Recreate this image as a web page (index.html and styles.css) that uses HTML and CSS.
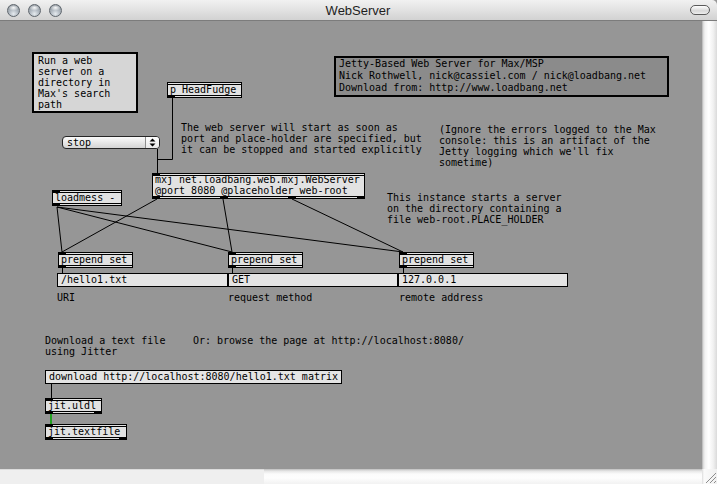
FILE: index.html
```html
<!DOCTYPE html>
<html>
<head>
<meta charset="utf-8">
<title>WebServer</title>
<link rel="stylesheet" href="styles.css">
</head>
<body>
<div class="window">
  <div class="titlebar">
    <div class="lights"><span class="light"></span><span class="light"></span><span class="light"></span></div>
    <div class="title">WebServer</div>
    <div class="pill"></div>
  </div>
  <div class="main">
    <div class="canvas">
      <svg class="cords" width="702" height="448" viewBox="0 0 702 448">
        <g stroke="#000" stroke-width="1" fill="none">
          <polyline points="172.5,77 172.5,138.5 157,138.5"/>
          <line x1="157.5" y1="128" x2="157.5" y2="152"/>
          <line x1="157" y1="178" x2="62" y2="231"/>
          <line x1="223" y1="178" x2="232" y2="231"/>
          <line x1="292" y1="178" x2="403" y2="231"/>
          <line x1="57" y1="186" x2="62" y2="231"/>
          <line x1="57" y1="186" x2="232" y2="231"/>
          <line x1="57" y1="186" x2="403" y2="231"/>
          <line x1="62.5" y1="247" x2="62.5" y2="252"/>
          <line x1="232.5" y1="247" x2="232.5" y2="252"/>
          <line x1="403.5" y1="247" x2="403.5" y2="252"/>
          <line x1="51.5" y1="363" x2="51.5" y2="377"/>
        </g>
        <line x1="51" y1="393" x2="51" y2="403" stroke="#22a022" stroke-width="2"/>
      </svg>

      <div class="node panel n-run">Run a web
server on a
directory in
Max's search
path</div>

      <div class="node jetty n-jetty">Jetty-Based Web Server for Max/MSP
Nick Rothwell, nick@cassiel.com / nick@loadbang.net
Download from: http://www.loadbang.net</div>

      <div class="node obj noin n-head">p HeadFudge</div>

      <div class="node cmt n-cmt1">The web server will start as soon as
port and place-holder are specified, but
it can be stopped and started explicitly</div>

      <div class="node cmt n-cmt2">(Ignore the errors logged to the Max
console: this is an artifact of the
Jetty logging which we'll fix
sometime)</div>

      <div class="node umenu n-umenu">
        <span class="um-label">stop</span>
        <span class="um-arrows">
          <svg width="7" height="9" viewBox="0 0 7 9"><path d="M3.5 0.5 L6.5 3.5 L0.5 3.5 Z M0.5 5.5 L6.5 5.5 L3.5 8.5 Z" fill="#000"/></svg>
        </span>
      </div>

      <div class="node obj two n-mxj">mxj net.loadbang.web.mxj.WebServer
@port 8080 @placeholder web-root<i class="port out2"></i><i class="port out3"></i><i class="port outr"></i></div>

      <div class="node obj n-loadmess">loadmess -</div>

      <div class="node cmt n-cmt3">This instance starts a server
on the directory containing a
file web-root.PLACE_HOLDER</div>

      <div class="node obj n-pre1">prepend set</div>
      <div class="node obj n-pre2">prepend set</div>
      <div class="node obj n-pre3">prepend set</div>

      <div class="node msg n-msg1">/hello1.txt</div>
      <div class="node msg n-msg2">GET</div>
      <div class="node msg n-msg3">127.0.0.1</div>

      <div class="node cmt n-lab1">URI</div>
      <div class="node cmt n-lab2">request method</div>
      <div class="node cmt n-lab3">remote address</div>

      <div class="node cmt n-cmt4">Download a text file
using Jitter</div>
      <div class="node cmt n-cmt5">Or: browse the page at http://localhost:8080/</div>

      <div class="node msg n-dl">download http://localhost:8080/hello1.txt matrix</div>
      <div class="node obj n-uldl">jit.uldl<i class="port outr"></i></div>
      <div class="node obj n-textfile">jit.textfile<i class="port outr"></i></div>
    </div>
    <div class="vscroll"></div>
  </div>
  <div class="bottombar">
    <div class="hleft"></div>
    <div class="hright"></div>
    <div class="grip">
      <svg width="15" height="15" viewBox="0 0 15 15">
        <g stroke="#8c8c8c" stroke-width="1">
          <line x1="14" y1="4" x2="4" y2="14"/>
          <line x1="14" y1="8" x2="8" y2="14"/>
          <line x1="14" y1="12" x2="12" y2="14"/>
        </g>
      </svg>
    </div>
  </div>
</div>
</body>
</html>
```

FILE: styles.css
```css
* { box-sizing: border-box; }

html, body {
  margin: 0;
  padding: 0;
}

body {
  width: 717px;
  height: 484px;
  overflow: hidden;
  font-family: "DejaVu Sans Mono", "Liberation Mono", monospace;
  font-size: 10px;
  color: #000;
  background: #969696;
}

.window {
  display: flex;
  flex-direction: column;
  width: 717px;
  height: 484px;
}

/* ---------- title bar ---------- */
.titlebar {
  flex: none;
  height: 21px;
  display: grid;
  grid-template-columns: 1fr auto 1fr;
  align-items: center;
  padding: 0 8px 0 7px;
  background: linear-gradient(#f1f1f1, #e2e2e2 50%, #d2d2d2);
  border-bottom: 1px solid #7c7c7c;
  border-top-right-radius: 5px;
}

.lights {
  display: flex;
  gap: 8px;
  padding-top: 1px;
}

.light {
  width: 13px;
  height: 13px;
  border-radius: 50%;
  border: 1px solid #5f666d;
  background:
    radial-gradient(ellipse 5px 3px at 50% 25%, rgba(255,255,255,0.95), rgba(255,255,255,0) 100%),
    radial-gradient(circle at 50% 80%, #e6ebef 0, #b4bcc4 40%, #7e868e 100%);
}

.title {
  font-family: "Liberation Sans", "DejaVu Sans", sans-serif;
  font-size: 13px;
  color: #1e1e1e;
  padding-top: 1px;
}

.pill {
  justify-self: end;
  width: 20px;
  height: 10px;
  border-radius: 5px;
  border: 1px solid #5a5a5a;
  background: linear-gradient(#ffffff, #d8d8d8 60%, #eeeeee);
  margin-right: -1px;
}

/* ---------- main area ---------- */
.main {
  flex: 1;
  display: flex;
  min-height: 0;
}

.canvas {
  flex: 1;
  position: relative;
  overflow: hidden;
  background: #969696;
}

.vscroll {
  flex: none;
  width: 15px;
  background: linear-gradient(to right, #a8a8a8 0, #d6d6d6 1px, #f2f2f2 3px, #ffffff 45%, #f1f1f1 75%, #dadada 100%);
}

.bottombar {
  flex: none;
  height: 15px;
  display: flex;
}

.hleft {
  width: 264px;
  background: #efefef;
  border-top: 1px solid #dcdcdc;
}

.hright {
  flex: 1;
  background: linear-gradient(#bdbdbd 0, #e6e6e6 2px, #fbfbfb 5px, #fdfdfd 60%, #f2f2f2 100%);
}

.grip {
  width: 15px;
  background: linear-gradient(to right, #dcdcdc 0, #fafafa 2px, #f0f0f0 100%);
}

.grip svg { display: block; }

/* ---------- patcher objects ---------- */
.cords {
  position: absolute;
  left: 0;
  top: 0;
}

.node {
  position: absolute;
  white-space: pre;
}

.cmt {
  line-height: 11px;
}

.panel {
  border: 2px solid #000;
  background: #d6d6d6;
  padding: 1px 0 0 4px;
  line-height: 11px;
}

.jetty {
  border: 2px solid #000;
  background: #8b8b8b;
  padding: 0 0 0 3px;
  line-height: 12px;
}

.obj {
  height: 16px;
  line-height: 13px;
  padding: 0 2px;
  border: 1px solid #000;
  background: #e2e2e2;
  box-shadow:
    inset 0 1px 0 #e2e2e2,
    inset 0 2px 0 #000,
    inset 0 -1px 0 #e2e2e2,
    inset 0 -2px 0 #000;
}

.obj::before,
.obj::after,
.port {
  content: "";
  position: absolute;
  width: 8px;
  height: 3px;
  background: #000;
}

.obj::before { left: -1px; top: -1px; }
.obj::after { left: -1px; bottom: -1px; }
.obj.noin::before { display: none; }

.port { bottom: -1px; }
.port.out2 { left: 67px; }
.port.out3 { left: 135px; }
.port.outr { right: -1px; }

.obj.two {
  height: 26px;
  line-height: 11px;
  padding-top: 0;
}

.msg {
  height: 14px;
  line-height: 12px;
  padding: 0 3px;
  border: 1px solid #000;
  background: #e4e4e4;
}

.umenu {
  display: flex;
  height: 13px;
  border: 1px solid #262626;
  border-radius: 4px;
  background: linear-gradient(#fbfbfb, #e4e4e4 60%, #d4d4d4);
  overflow: hidden;
}

.um-label {
  flex: 1;
  padding-left: 4px;
  line-height: 11px;
}

.um-arrows {
  width: 14px;
  display: flex;
  align-items: center;
  justify-content: center;
  border-left: 1px solid #8e8e8e;
  background: linear-gradient(#ffffff, #e8e8e8);
}

.um-arrows svg { display: block; }

/* positions on the patcher canvas (canvas origin = window y 21) */
.n-run      { left: 32px;  top: 31px;  width: 106px; height: 61px; }
.n-jetty    { left: 334px; top: 35px;  width: 335px; height: 41px; }
.n-head     { left: 167px; top: 61px;  width: 75px; }
.n-cmt1     { left: 181px; top: 101px; }
.n-cmt2     { left: 439px; top: 103px; }
.n-umenu    { left: 62px;  top: 115px; width: 98px; }
.n-mxj      { left: 152px; top: 152px; width: 213px; }
.n-loadmess { left: 52px;  top: 169px; width: 70px; }
.n-cmt3     { left: 387px; top: 171px; }
.n-pre1     { left: 58px;  top: 231px; width: 75px; }
.n-pre2     { left: 228px; top: 231px; width: 75px; }
.n-pre3     { left: 399px; top: 231px; width: 75px; }
.n-msg1     { left: 57px;  top: 252px; width: 171px; }
.n-msg2     { left: 228px; top: 252px; width: 170px; }
.n-msg3     { left: 398px; top: 252px; width: 170px; }
.n-lab1     { left: 57px;  top: 271px; }
.n-lab2     { left: 228px; top: 271px; }
.n-lab3     { left: 399px; top: 271px; }
.n-cmt4     { left: 45px;  top: 314px; }
.n-cmt5     { left: 193px; top: 314px; }
.n-dl       { left: 45px;  top: 349px; width: 297px; }
.n-uldl     { left: 45px;  top: 377px; width: 57px; }
.n-textfile { left: 45px;  top: 403px; width: 82px; }
```
